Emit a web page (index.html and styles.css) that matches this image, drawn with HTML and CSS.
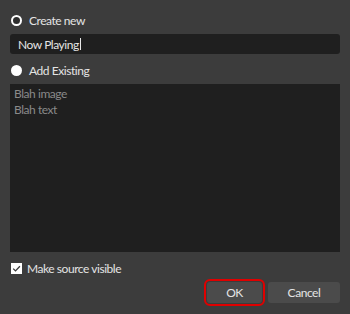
FILE: index.html
```html
<!DOCTYPE html>
<html>
<head>
<meta charset="utf-8">
<link rel="stylesheet" href="styles.css">
</head>
<body>
<div class="dialog">
  <div class="row row-first">
    <span class="radio radio-off"></span>
    <span class="label">Create new</span>
  </div>
  <div class="input"><span class="input-text">Now Playing</span><span class="caret"></span></div>
  <div class="row row-gap">
    <span class="radio radio-on"></span>
    <span class="label">Add Existing</span>
  </div>
  <div class="list">
    <div class="list-item">Blah image</div>
    <div class="list-item">Blah text</div>
  </div>
  <div class="row row-gap">
    <span class="checkbox"><svg width="11" height="11" viewBox="0 0 11 11"><path d="M2.2 5.6 L4.5 7.9 L8.9 3.3" fill="none" stroke="#3a3a3a" stroke-width="1.3"/></svg></span>
    <span class="label label-check">Make source visible</span>
  </div>
  <div class="buttons">
    <button class="btn btn-ok">OK</button>
    <button class="btn btn-cancel">Cancel</button>
  </div>
</div>
</body>
</html>
```
FILE: styles.css
```css
html, body {
  margin: 0;
  padding: 0;
  background: #3c3c3c;
}
body {
  width: 350px;
  height: 314px;
  overflow: hidden;
  font-family: Lato, "Noto Sans", sans-serif;
  font-size: 12px;
  letter-spacing: -0.45px;
  color: #e4e4e4;
}
.dialog {
  display: flex;
  flex-direction: column;
  padding: 10px 10px 0 10px;
}
.row {
  display: flex;
  align-items: center;
  height: 21px;
}
.row-gap {
  margin-top: 6px;
}
.radio {
  box-sizing: border-box;
  width: 11px;
  height: 11px;
  border-radius: 50%;
  margin-left: 1px;
  flex: none;
}
.radio-off {
  border: 2px solid #ffffff;
  background: #2e2e2e;
}
.radio-on {
  background: #ffffff;
}
.label {
  margin-left: 7px;
  white-space: nowrap;
}
.label-check {
  margin-left: 5px;
}
.checkbox {
  width: 11px;
  height: 11px;
  margin-left: 1px;
  background: #ffffff;
  display: flex;
  flex: none;
}
.input {
  margin-top: 3px;
  height: 20px;
  background: #1f1f1f;
  border-radius: 3px;
  display: flex;
  align-items: center;
  padding-left: 8px;
  box-sizing: border-box;
}
.caret {
  display: inline-block;
  width: 1px;
  height: 12px;
  background: #e8e8e8;
  margin-left: 1px;
}
.list {
  margin-top: 3px;
  height: 168px;
  background: #1f1f1f;
  padding: 2px 4px;
  box-sizing: border-box;
}
.list-item {
  color: #8a8a8a;
  line-height: 16px;
}
.buttons {
  display: flex;
  justify-content: flex-end;
  gap: 6px;
  margin-top: 3px;
}
.btn {
  height: 21px;
  border: none;
  border-radius: 3px;
  background: #4b4b4b;
  color: #e4e4e4;
  font-family: Lato, "Noto Sans", sans-serif;
  font-size: 12px;
  letter-spacing: -0.45px;
  padding: 0;
}
.btn-ok {
  width: 55px;
  outline: 2px solid #e00000;
  outline-offset: 1px;
}
.btn-cancel {
  width: 72px;
}
```
